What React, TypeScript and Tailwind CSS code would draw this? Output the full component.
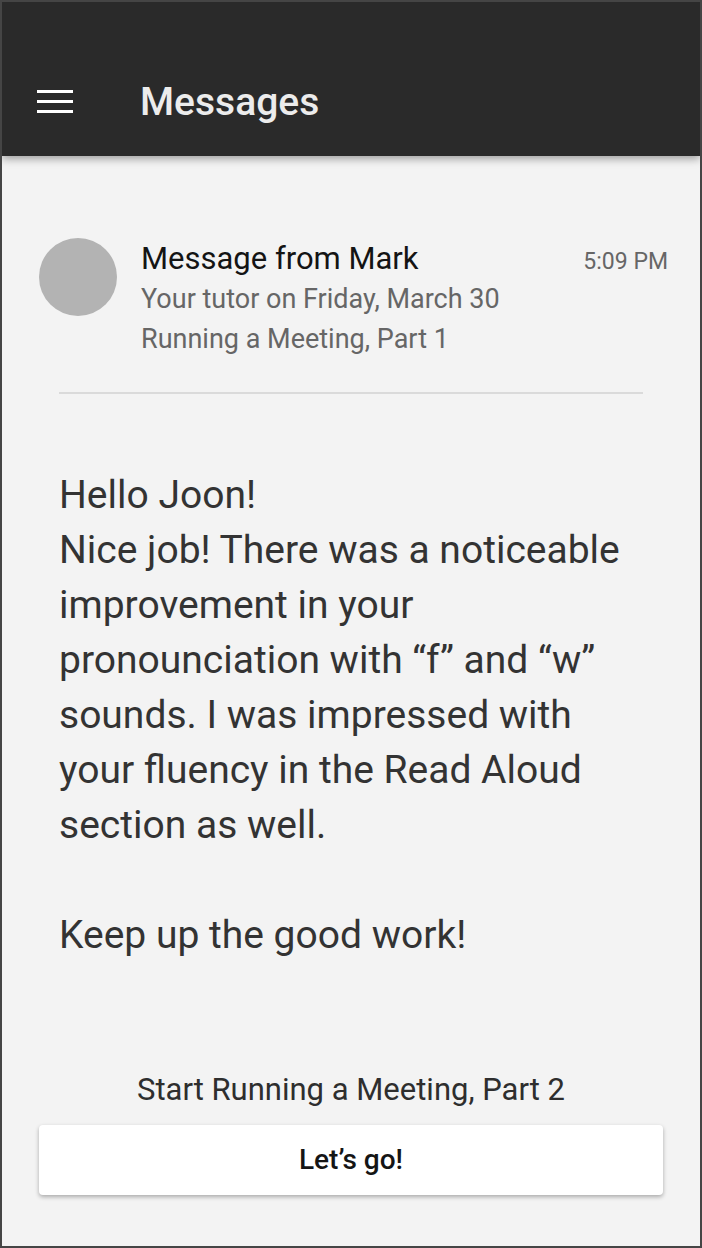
import React from "react";

const font = { fontFamily: "Roboto, 'Noto Sans', sans-serif" };

function MenuIcon() {
  return (
    <svg width="36" height="24" viewBox="0 0 36 24" className="block">
      <rect x="0" y="0" width="36" height="3" fill="#ffffff" />
      <rect x="0" y="10" width="36" height="3" fill="#ffffff" />
      <rect x="0" y="20" width="36" height="3" fill="#ffffff" />
    </svg>
  );
}

export default function App() {
  return (
    <div
      className="w-[702px] h-[1248px] border-2 border-[#454545] bg-[#f3f3f3] flex flex-col overflow-hidden"
      style={font}
    >
      {/* top bar */}
      <header className="relative z-10 h-[154px] shrink-0 bg-[#2a2a2a] pt-[46px] shadow-[0_3px_8px_rgba(0,0,0,0.35)]">
        <div className="h-[108px] flex items-center pl-[35px]">
          <MenuIcon />
          <h1 className="ml-[67px] text-[39px] font-medium text-[#ececec] leading-none">Messages</h1>
        </div>
      </header>

      {/* message header */}
      <div className="flex pt-[80px] pl-[37px] pr-[32px]">
        <div className="mt-[2px] w-[78px] h-[78px] rounded-full bg-[#b3b3b3] shrink-0" />
        <div className="ml-[24px] flex-1">
          <div className="h-[43px] pt-[3px] flex items-baseline justify-between overflow-visible">
            <span className="text-[31px] leading-[40px] text-[#141414]">Message from Mark</span>
            <span className="text-[23px] leading-[40px] text-[#666666]">5:09 PM</span>
          </div>
          <p className="text-[27px] leading-[40px] text-[#666666]">Your tutor on Friday, March 30</p>
          <p className="text-[27px] leading-[40px] text-[#666666]">Running a Meeting, Part 1</p>
        </div>
      </div>

      <div className="mx-[57px] mt-[33px] h-[2px] bg-[#dadada]" />

      {/* body */}
      <div className="px-[57px] pt-[74px] text-[39px] leading-[55px] text-[#333333]">
        <p>Hello Joon!</p>
        <p>
          Nice job! There was a noticeable improvement in your pronounciation with “f” and “w” sounds. I was
          impressed with your fluency in the Read Aloud section as well.
        </p>
        <p className="mt-[55px]">Keep up the good work!</p>
      </div>

      {/* footer */}
      <div className="mt-auto pb-[51px] px-[37px]">
        <p className="text-center text-[31px] leading-[40px] text-[#2e2e2e]">Start Running a Meeting, Part 2</p>
        <button className="mt-[15px] w-full h-[70px] bg-white rounded-[4px] shadow-[0_2px_4px_rgba(0,0,0,0.3)] text-[28px] font-medium text-[#151515]">
          Let’s go!
        </button>
      </div>
    </div>
  );
}
